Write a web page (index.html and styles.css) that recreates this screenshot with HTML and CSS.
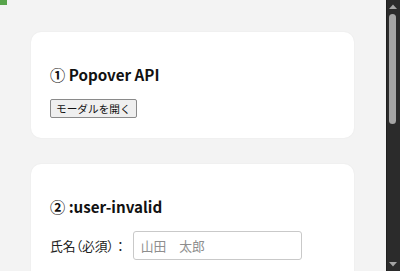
FILE: index.html
```html
<!DOCTYPE html>
<html lang="ja">
<head>
<meta charset="utf-8">
<title>Modern CSS Demo</title>
<link rel="stylesheet" href="styles.css">
</head>
<body>
<div class="corner-mark"></div>
<div class="viewport">
  <main class="page">
    <section class="card">
      <h2 class="card-title">① Popover API</h2>
      <button class="btn" type="button">モーダルを開く</button>
    </section>

    <section class="card card-tall">
      <h2 class="card-title">② :user-invalid</h2>
      <form class="form">
        <div class="field">
          <label class="field-label" for="name"><span class="palt">氏名（必須）</span>：</label>
          <input class="field-input" id="name" type="text" placeholder="山田　太郎" required>
        </div>
      </form>
    </section>
  </main>
</div>
<div class="scrollbar" aria-hidden="true">
  <div class="sb-btn">
    <svg width="14" height="14" viewBox="0 0 14 14"><path d="M3 9 L7 4.5 L11 9 Z" fill="#a5a5a5"/></svg>
  </div>
  <div class="sb-track">
    <div class="sb-thumb"></div>
  </div>
  <div class="sb-btn">
    <svg width="14" height="14" viewBox="0 0 14 14"><path d="M3 5 L7 9.5 L11 5 Z" fill="#a5a5a5"/></svg>
  </div>
</div>
</body>
</html>
```

FILE: styles.css
```css
html, body {
  height: 100%;
}

body {
  margin: 0;
  display: flex;
  overflow: hidden;
  background: #f3f3f3;
  font-family: "Noto Sans CJK JP", "Noto Sans", sans-serif;
  color: #1a1a1a;
}

.corner-mark {
  position: absolute;
  top: 0;
  left: 0;
  width: 7px;
  height: 5px;
  background: #58a44b;
}

.viewport {
  flex: 1;
  min-width: 0;
  overflow: hidden;
}

.page {
  display: flex;
  flex-direction: column;
  gap: 26px;
  padding: 32px 32px 32px 31px;
}

.card {
  display: flex;
  flex-direction: column;
  align-items: flex-start;
  background: #ffffff;
  border-radius: 10px;
  padding: 19px 19px 20px;
  box-shadow: 0 0 2px rgba(0, 0, 0, 0.06);
}

.card-tall {
  padding-bottom: 120px;
}

.card-title {
  margin: 11.5px 0 13.5px;
  font-size: 15.2px;
  line-height: 23px;
  font-weight: 700;
  color: #111;
}

.btn {
  display: block;
  margin: 0;
  padding: 1px 5px;
  font-family: "Noto Sans CJK JP", sans-serif;
  font-size: 10.67px;
  line-height: 15px;
  color: #111;
  background: #efefef;
  border: 1px solid #8a8a8a;
  border-radius: 2px;
}

.form {
  display: flex;
  flex-direction: column;
  align-items: flex-start;
  gap: 12px;
}

.field {
  display: flex;
  align-items: center;
  gap: 6px;
}

.field-label {
  font-size: 12.8px;
  line-height: 18px;
  color: #222;
}

.palt {
  font-feature-settings: "palt";
}

.field-input {
  box-sizing: border-box;
  width: 169px;
  height: 29px;
  margin: 0;
  padding: 0 7px;
  font-family: "Noto Sans CJK JP", sans-serif;
  font-size: 12.8px;
  color: #222;
  background: #fff;
  border: 1px solid #c9c9c9;
  border-radius: 3px;
}
.field-input::placeholder {
  color: #8e8e8e;
}

.scrollbar {
  flex: 0 0 14px;
  display: flex;
  flex-direction: column;
  background: #2b2b2b;
  box-shadow: inset 1px 0 0 #1f1f1f;
}

.sb-btn {
  height: 14px;
  flex: 0 0 14px;
}
.sb-btn svg {
  display: block;
}

.sb-track {
  flex: 1;
}

.sb-thumb {
  height: 110px;
  margin: 0 4px 0 3px;
  border-radius: 4px;
  background: #a5a5a5;
}
```
